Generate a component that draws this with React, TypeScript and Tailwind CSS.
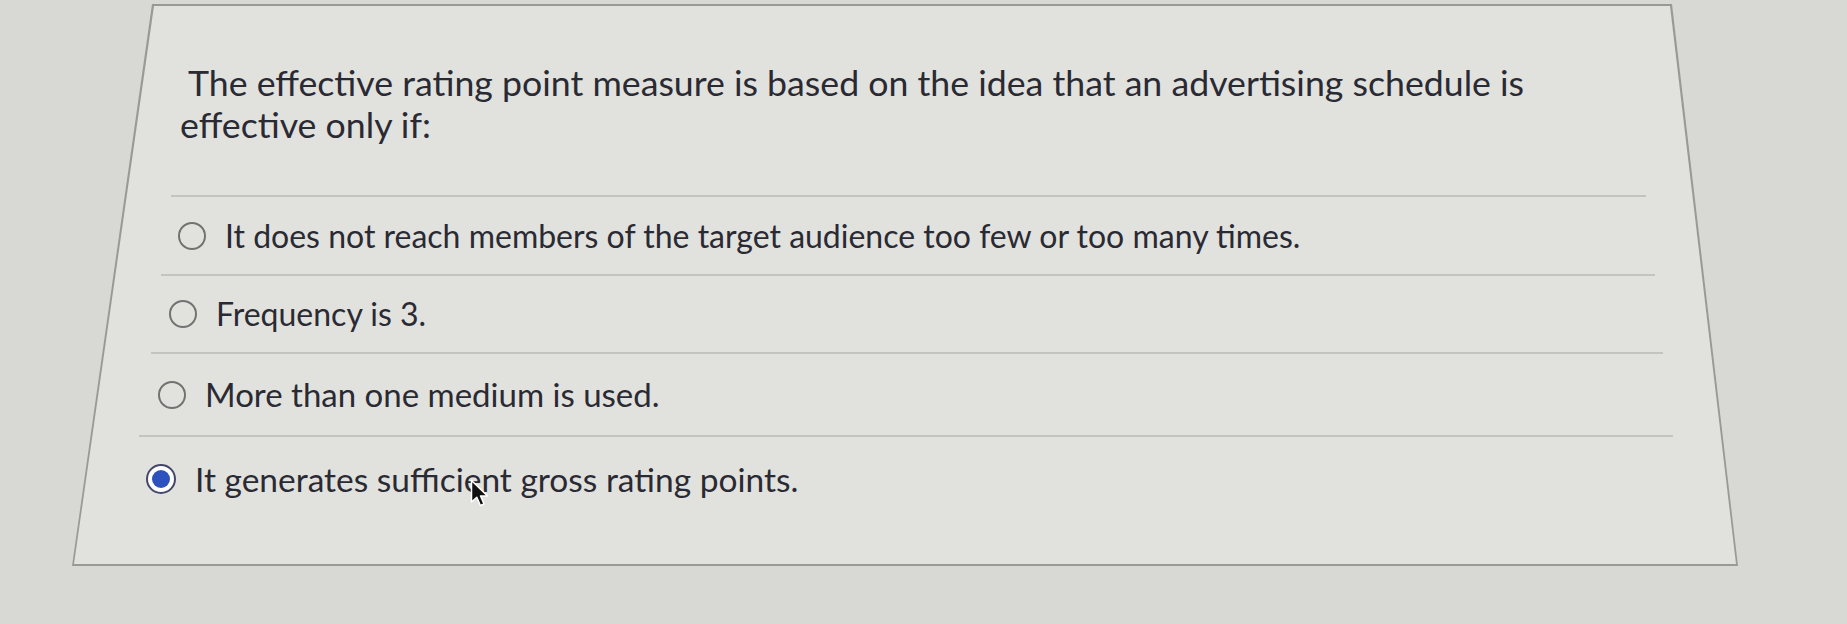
import React from 'react';

// rows are nudged left and down a little more each time, the photo was taken at an angle
const options = [
  { id: 'a', label: 'It does not reach members of the target audience too few or too many times.', row: 'h-[77px] pl-[104px] text-[32px]' },
  { id: 'b', label: 'Frequency is 3.', row: 'h-[76px] pl-[95px] text-[32px]' },
  { id: 'c', label: 'More than one medium is used.', row: 'h-[81px] pl-[84px] text-[33px]' },
  { id: 'd', label: 'It generates sufficient gross rating points.', row: 'h-[84px] pl-[72px] text-[33.5px]' },
];

const dividers = [
  'ml-[97px] w-[1475px]',
  'ml-[87px] w-[1494px]',
  'ml-[77px] w-[1512px]',
  'ml-[65px] w-[1534px]',
];

function Radio({ checked }: { checked: boolean }) {
  if (checked) {
    return (
      <span className="flex h-[30px] w-[30px] shrink-0 items-center justify-center rounded-full border-[2.5px] border-[#43476b] bg-white">
        <span className="h-[18px] w-[18px] rounded-full bg-[#2d52bd]" />
      </span>
    );
  }
  return <span className="h-[28px] w-[28px] shrink-0 rounded-full border-2 border-[#727272]" />;
}

function Cursor() {
  return (
    <svg
      className="pointer-events-none absolute left-[396px] top-[42px]"
      width="21"
      height="29"
      viewBox="0 0 21 29"
    >
      <path
        d="M1.5 1.5 L1.5 23 L6.8 18.2 L10.4 26.5 L14 25 L10.5 16.9 L17.5 16.9 Z"
        fill="#111"
        stroke="#fff"
        strokeWidth="1.5"
        strokeLinejoin="round"
      />
    </svg>
  );
}

export default function App() {
  const selected = 'd';

  return (
    <div className="h-[624px] w-[1847px] overflow-hidden bg-[#d8d8d5] pt-[4px] font-['Lato','Liberation_Sans',sans-serif] text-[#2a2a33]">
      <div className="ml-[72px] h-[562px] w-[1666px] bg-[#999997] p-[2px] [clip-path:polygon(80px_0,1600px_0,100%_100%,0_100%)]">
        <div className="h-full w-full bg-[#e1e1de] [clip-path:polygon(80px_0,1596px_0,100%_100%,0_100%)]">
          <h2 className="pt-[56px] text-[35.7px] leading-[42px]">
            <span className="block pl-[114px]">
              The effective rating point measure is based on the idea that an advertising schedule is
            </span>
            <span className="block pl-[106px]">effective only if:</span>
          </h2>

          <div className="mt-[49px]">
            {options.map((opt, i) => (
              <div key={opt.id}>
                <div className={`h-[2px] bg-[#c3c3c1] ${dividers[i]}`} />
                <label className={`relative flex items-center gap-[19px] ${opt.row}`}>
                  <Radio checked={opt.id === selected} />
                  <span>{opt.label}</span>
                  {opt.id === selected && <Cursor />}
                </label>
              </div>
            ))}
          </div>
        </div>
      </div>
    </div>
  );
}
